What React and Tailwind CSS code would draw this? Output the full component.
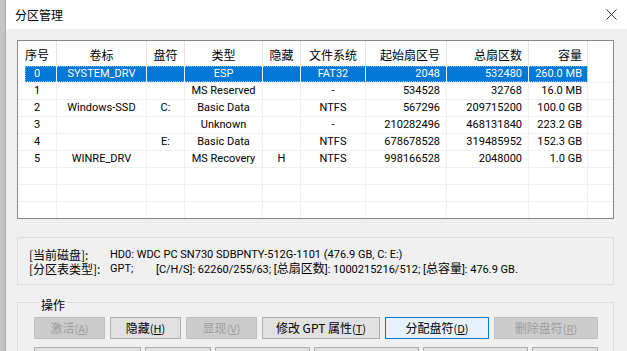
const cols = "grid grid-cols-[39px_90px_38px_78px_38px_65px_81px_82px_59px_1fr]";

const headers = ["序号", "卷标", "盘符", "类型", "隐藏", "文件系统", "起始扇区号", "总扇区数", "容量"];

const align = [
  "justify-center",
  "justify-center",
  "justify-center",
  "justify-center",
  "justify-center",
  "justify-center",
  "justify-end pr-[6px]",
  "justify-end pr-[6px]",
  "justify-end pr-[5px]",
];

const partitions = [
  ["0", "SYSTEM_DRV", "", "ESP", "", "FAT32", "2048", "532480", "260.0 MB"],
  ["1", "", "", "MS Reserved", "", "-", "534528", "32768", "16.0 MB"],
  ["2", "Windows-SSD", "C:", "Basic Data", "", "NTFS", "567296", "209715200", "100.0 GB"],
  ["3", "", "", "Unknown", "", "-", "210282496", "468131840", "223.2 GB"],
  ["4", "", "E:", "Basic Data", "", "NTFS", "678678528", "319485952", "152.3 GB"],
  ["5", "WINRE_DRV", "", "MS Recovery", "H", "NTFS", "998166528", "2048000", "1.0 GB"],
  ["", "", "", "", "", "", "", "", ""],
  ["", "", "", "", "", "", "", "", ""],
  ["", "", "", "", "", "", "", "", ""],
];

function Row({ cells, selected }) {
  return (
    <div className={`${cols} relative h-[17px] font-['Roboto','Noto_Sans_CJK_SC',sans-serif] text-[11px]`}>
      {cells.map((c, i) => (
        <div
          key={i}
          className={`flex h-[17px] items-center border-b border-r border-[#f0f0f0] leading-[16px] ${align[i]} ${
            selected ? "text-white" : "text-black"
          } ${selected && i > 0 ? "bg-[#0078d7]" : ""}`}
        >
          {selected && i === 0 ? (
            <div className="ml-[7px] flex h-full flex-1 items-center justify-center bg-[#0078d7] pr-[7px]">{c}</div>
          ) : (
            c
          )}
        </div>
      ))}
      <div className="border-b border-[#f0f0f0]" />
      {selected && (
        <div className="pointer-events-none absolute left-[7px] top-0 h-[16px] w-[563px] border border-dotted border-[#7fbbeb]" />
      )}
    </div>
  );
}

function Btn({ label, k, w, state = "normal" }) {
  const styles = {
    normal: "bg-[#e1e1e1] border-[#adadad] text-black",
    disabled: "bg-[#cccccc] border-[#bfbfbf] text-[#9c9c9c]",
    focus: "bg-[#e5f1fb] border-[#0078d7] text-black",
  };
  return (
    <div className={`flex h-[22px] shrink-0 items-center justify-center border ${styles[state]} ${w}`}>
      <span>
        {label}
        <span className="text-[11px]">
          (<span className="underline">{k}</span>)
        </span>
      </span>
    </div>
  );
}

export default function App() {
  return (
    <div className="flex h-[351px] w-[627px] overflow-hidden font-['Noto_Sans_CJK_SC','Noto_Sans',sans-serif] text-[12px] text-black">
      <div className="w-[6px] shrink-0 border-r border-[#ababab] bg-[#c4c4c4]" />
      <div className="flex flex-1 flex-col">
        <div className="flex h-[29px] shrink-0 items-center justify-between bg-white pl-[9px] pr-[9px]">
          <span className="text-[12px] leading-none">分区管理</span>
          <svg width="11" height="11" viewBox="0 0 11 11" className="mr-[1px]">
            <path d="M0.5 0.5 L10.5 10.5 M10.5 0.5 L0.5 10.5" stroke="#333" strokeWidth="1" fill="none" />
          </svg>
        </div>
        <div className="flex flex-1 flex-col bg-[#f0f0f0] pl-[11px] pr-[13px] pt-[11px]">
          <div className="h-[179px] overflow-hidden border border-[#828790] bg-white">
            <div className={`${cols} h-[25px]`}>
              {headers.map((h, i) => (
                <div key={h} className={`flex items-center border-r border-[#e5e5e5] pt-[2px] ${align[i]}`}>
                  {h}
                </div>
              ))}
              <div />
            </div>
            {partitions.map((r, i) => (
              <Row key={i} cells={r} selected={i === 0} />
            ))}
          </div>

          <div className="mt-[18px] h-[48px] border border-[#dcdcdc] pl-[11px] pt-[10px] leading-[14px]">
            <div className="flex">
              <span className="w-[81px] shrink-0">[当前磁盘]:</span>
              <span className="font-['Roboto','Noto_Sans_CJK_SC',sans-serif] text-[11px]">
                HD0: WDC PC SN730 SDBPNTY-512G-1101 (476.9 GB, C: E:)
              </span>
            </div>
            <div className="flex">
              <span className="w-[81px] shrink-0">[分区表类型]:</span>
              <span className="w-[46px] shrink-0 font-['Roboto',sans-serif] text-[11px]">GPT;</span>
              <span className="font-['Roboto','Noto_Sans_CJK_SC',sans-serif] text-[11px]">
                [C/H/S]: 62260/255/63; [<span className="text-[12px]">总扇区数</span>]: 1000215216/512; [
                <span className="text-[12px]">总容量</span>]: 476.9 GB.
              </span>
            </div>
          </div>

          <fieldset className="mt-[7px] border border-[#dcdcdc] pl-[16px]">
            <legend className="ml-[5px] px-[2px] pt-[6px] leading-[14px]">操作</legend>
            <div className="mt-[5px] flex gap-[5px]">
              <Btn label="激活" k="A" w="w-[71px]" state="disabled" />
              <Btn label="隐藏" k="H" w="w-[71px]" />
              <Btn label="显现" k="V" w="w-[71px]" state="disabled" />
              <Btn label="修改 GPT 属性" k="T" w="w-[118px]" />
              <Btn label="分配盘符" k="D" w="w-[104px]" state="focus" />
              <Btn label="删除盘符" k="R" w="w-[104px]" state="disabled" />
            </div>
            <div className="mt-[8px] flex gap-[4px]">
              <div className="h-[22px] w-[107px] border border-[#adadad] bg-[#e1e1e1]" />
              <div className="h-[22px] w-[66px] border border-[#adadad] bg-[#e1e1e1]" />
              <div className="h-[22px] w-[95px] border border-[#adadad] bg-[#e1e1e1]" />
              <div className="h-[22px] w-[105px] border border-[#adadad] bg-[#e1e1e1]" />
              <div className="h-[22px] w-[105px] border border-[#adadad] bg-[#e1e1e1]" />
              <div className="h-[22px] w-[66px] border border-[#adadad] bg-[#e1e1e1]" />
            </div>
          </fieldset>
        </div>
      </div>
    </div>
  );
}
